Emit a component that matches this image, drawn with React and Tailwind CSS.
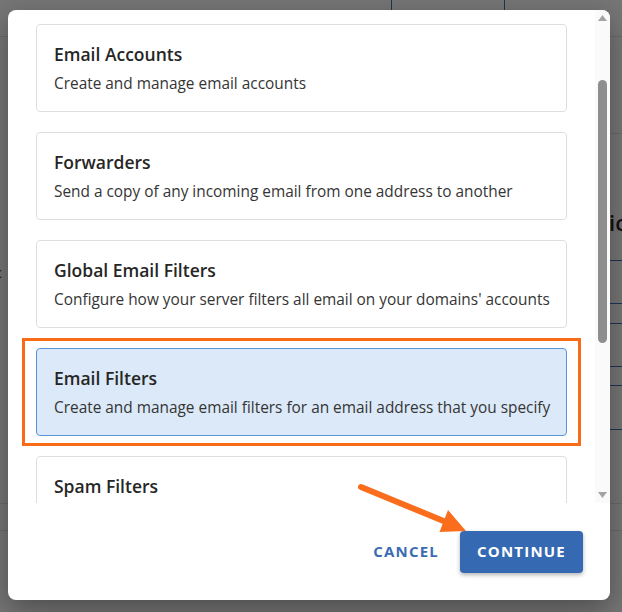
import React from "react";

const cards = [
  { t: "Email Accounts", d: "Create and manage email accounts" },
  { t: "Forwarders", d: "Send a copy of any incoming email from one address to another" },
  { t: "Global Email Filters", d: "Configure how your server filters all email on your domains' accounts" },
  { t: "Email Filters", d: "Create and manage email filters for an email address that you specify", sel: true },
  { t: "Spam Filters", d: "Configure spam filtering for your accounts" },
];

function Card({ t, d, sel }) {
  const inner = (
    <div
      className={
        "rounded-[4px] border px-[17px] pt-[17px] pb-[17px] " +
        (sel ? "bg-[#dbe9f8] border-[#5b97d8]" : "bg-white border-[#dedede]")
      }
    >
      <div className="text-[17.5px] leading-[24px] font-semibold text-[#262626]">{t}</div>
      <div className="mt-[8px] text-[15.4px] leading-[20px] text-[#353535] whitespace-nowrap">{d}</div>
    </div>
  );
  if (!sel) return inner;
  return (
    <div className="relative">
      {inner}
      <span className="absolute -left-[14px] -right-[14px] -top-[10px] -bottom-[10px] border-[3px] border-[#fa6b18] pointer-events-none" />
    </div>
  );
}

export default function App() {
  return (
    <div
      className="relative w-[622px] h-[612px] overflow-hidden bg-[#767676] pl-[8px] pt-[10px]"
      style={{ fontFamily: '"Open Sans", "Noto Sans", sans-serif' }}
    >
      {/* background page behind the overlay */}
      <svg className="absolute left-0 top-0" width="622" height="612" viewBox="0 0 622 612">
        <g stroke="#6a6a6a" strokeWidth="1">
          <line x1="0" y1="36.5" x2="622" y2="36.5" />
          <line x1="600" y1="133.5" x2="622" y2="133.5" />
          <line x1="0" y1="503.5" x2="622" y2="503.5" />
          <line x1="0" y1="530.5" x2="622" y2="530.5" />
        </g>
        <g stroke="#1d3459" strokeWidth="1">
          <line x1="391.5" y1="0" x2="391.5" y2="12" />
          <line x1="504.5" y1="0" x2="504.5" y2="12" />
          <line x1="600" y1="260.5" x2="622" y2="260.5" />
          <line x1="600" y1="303.5" x2="622" y2="303.5" />
          <line x1="600" y1="323.5" x2="622" y2="323.5" />
          <line x1="600" y1="366.5" x2="622" y2="366.5" />
          <line x1="600" y1="385.5" x2="622" y2="385.5" />
          <line x1="600" y1="429.5" x2="622" y2="429.5" />
        </g>
      </svg>
      <div className="absolute left-[609px] top-[206px] text-[22px] font-semibold text-[#111]">ic</div>
      <div className="absolute -left-[5px] top-[262px] text-[14px] text-[#111]">c</div>

      {/* modal */}
      <div className="relative w-[602px] h-[590px] bg-white rounded-[8px] shadow-[0_10px_30px_rgba(0,0,0,0.35)] flex flex-col overflow-hidden">
        <div className="flex h-[493px]">
          <div className="flex-1 overflow-hidden px-[28px] pt-[14px] flex flex-col gap-[20px]">
            {cards.map((c) => (
              <Card key={c.t} {...c} />
            ))}
          </div>
          <div className="w-[15px] bg-[#fafafa] flex flex-col items-center">
            <svg width="9" height="6" viewBox="0 0 9 6" className="mt-[5px]">
              <polygon points="0,6 9,6 4.5,0" fill="#a3a3a3" />
            </svg>
            <div className="mt-[59px] w-[9px] h-[263px] rounded-full bg-[#8e8e8e]" />
            <div className="flex-1" />
            <svg width="9" height="6" viewBox="0 0 9 6" className="mb-[5px]">
              <polygon points="0,0 9,0 4.5,6" fill="#a3a3a3" />
            </svg>
          </div>
        </div>
        <div className="flex-1 flex items-center justify-end pr-[27px] gap-[5px]">
          <button className="px-[16px] h-[42px] text-[15px] font-bold tracking-[1.2px] text-[#3a6cb4]">
            CANCEL
          </button>
          <button className="w-[123px] h-[42px] rounded-[4px] bg-[#356ab2] text-white text-[15px] font-bold tracking-[1.2px] shadow-[0_2px_4px_rgba(0,0,0,0.3)]">
            CONTINUE
          </button>
        </div>
      </div>

      {/* annotation arrow */}
      <svg className="absolute left-0 top-0 pointer-events-none" width="622" height="612" viewBox="0 0 622 612">
        <line x1="361" y1="487" x2="446" y2="522" stroke="#f96d1c" strokeWidth="6" strokeLinecap="round" />
        <polygon points="466,531 448,510 439.5,532" fill="#f96d1c" />
      </svg>
    </div>
  );
}
